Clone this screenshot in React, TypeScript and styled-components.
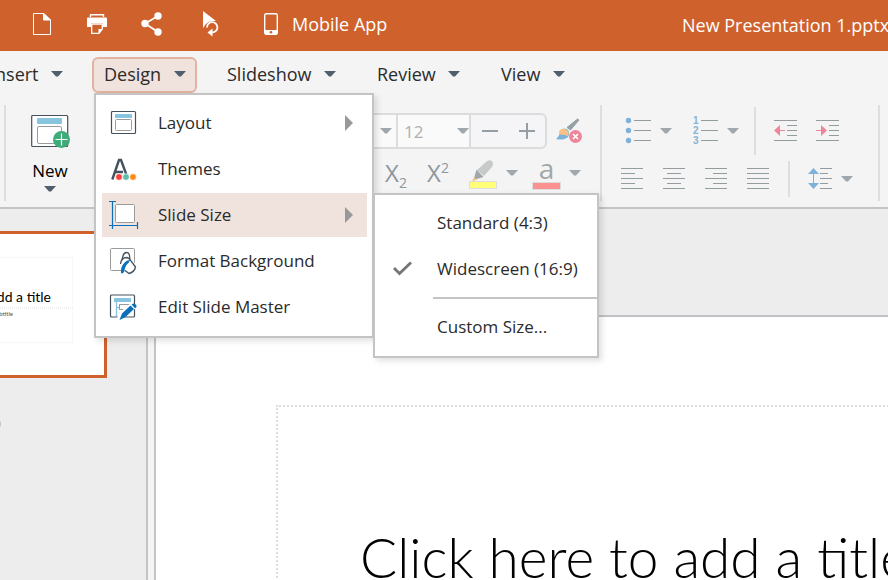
import React from "react";
import styled, { createGlobalStyle } from "styled-components";

const ink = "#44525e";
const fade = "#a0a8ae";
const line = "#c4c4c4";
const orange = "#cf622c";

const Global = createGlobalStyle`
  * { box-sizing: border-box; }
  body { margin: 0; font-family: "Open Sans", "Noto Sans", sans-serif; color: #2b2b2b; }
  button, select { font: inherit; color: inherit; background: none; border: 0; padding: 0; margin: 0; }
  svg { display: block; flex: none; overflow: visible; }
`;

const Shell = styled.div`
  display: flex;
  flex-direction: column;
  height: 100vh;
  overflow: hidden;
  background: #f4f4f4;
`;

const TitleBar = styled.header`
  display: flex;
  align-items: center;
  flex: none;
  height: 51px;
  padding: 0 0 4px 29px;
  background: ${orange};
  color: #fff;
  font-size: 18px;
`;

const TitleButton = styled.button`
  display: flex;
  align-items: center;
  justify-content: center;
  width: 26px;
  height: 40px;
  margin-right: 29px;
`;

const MobileLink = styled.a`
  display: flex;
  align-items: center;
  gap: 14px;
  margin-left: 15px;
  padding-top: 1px;
  color: inherit;
  text-decoration: none;
  white-space: nowrap;
`;

const FileName = styled.h1`
  width: 206px;
  margin: 2px 0 0 auto;
  font-size: 18px;
  font-weight: 400;
  white-space: nowrap;
`;

const Tabs = styled.nav`
  display: flex;
  align-items: center;
  flex: none;
  gap: 18px;
  height: 48px;
  margin-left: -22px;
`;

const TabSlot = styled.div`
  position: relative;
`;

const Tab = styled.button<{ $width: number; $open?: boolean }>`
  display: flex;
  align-items: center;
  justify-content: space-between;
  width: ${(p) => p.$width}px;
  height: 36px;
  padding: 0 9px 2px 10px;
  border: 2px solid ${(p) => (p.$open ? "#e2b39f" : "transparent")};
  border-radius: 6px;
  background: ${(p) => (p.$open ? "#f0e2dd" : "transparent")};
  font-size: 18px;
  white-space: nowrap;
`;

const Menu = styled.div<{ $sub?: boolean }>`
  position: absolute;
  z-index: ${(p) => (p.$sub ? 3 : 2)};
  top: ${(p) => (p.$sub ? "0" : "100%")};
  left: ${(p) => (p.$sub ? "271px" : "2px")};
  display: flex;
  flex-direction: column;
  gap: 2px;
  width: ${(p) => (p.$sub ? 226 : 280)}px;
  padding: 6px 5px 7px 6px;
  border: 2px solid ${line};
  background: #fff;
  box-shadow: 3px 3px 6px rgba(0, 0, 0, 0.12);
  font-size: 17px;
`;

const MenuSlot = styled.div`
  position: relative;
`;

const MenuItem = styled.button<{ $active?: boolean; $sub?: boolean }>`
  display: grid;
  grid-template-columns: ${(p) => (p.$sub ? "44px" : "42px")} 1fr auto;
  align-items: center;
  width: 100%;
  height: 44px;
  padding: 0 14px 1px ${(p) => (p.$sub ? 12 : 6)}px;
  background: ${(p) => (p.$active ? "#f0e2dd" : "transparent")};
  text-align: left;
  white-space: nowrap;
`;

const MenuLabel = styled.span`
  grid-column: 2;
  padding-left: 8px;
`;

const SubLabel = styled.span`
  grid-column: 2;
`;

const MenuRule = styled.hr`
  width: 164px;
  height: 2px;
  margin: 4px -5px 4px auto;
  border: 0;
  background: ${line};
`;

const Ribbon = styled.div`
  display: flex;
  align-items: flex-start;
  flex: none;
  height: 110px;
  padding: 6px 0 0 4px;
  border-bottom: 2px solid ${line};
`;

const Rule = styled.span<{ $h: number }>`
  flex: none;
  width: 2px;
  height: ${(p) => p.$h}px;
  background: #dedede;
`;

const NewButton = styled.button`
  display: flex;
  flex-direction: column;
  align-items: center;
  flex: none;
  width: 88px;
  padding-top: 9px;
  color: #000;
  font-size: 17px;
  line-height: 24px;
  span { margin: 11px 0 3px; }
`;

const FontGroup = styled.div`
  flex: none;
  width: 506px;
  padding-top: 5px;
`;

const Row = styled.div<{ $h: number; $pad: string; $gap?: number; $end?: boolean }>`
  display: flex;
  align-items: center;
  justify-content: ${(p) => (p.$end ? "flex-end" : "flex-start")};
  gap: ${(p) => p.$gap || 0}px;
  height: ${(p) => p.$h}px;
  padding: ${(p) => p.$pad};
`;

const FontBox = styled.div`
  display: flex;
  height: 36px;
  border: 2px solid #dcdcdc;
  border-radius: 6px;
  background: #f5f5f8;
  overflow: hidden;
  color: #b0b0b0;
  font-size: 17px;
`;

const Picker = styled.label<{ $w: number; $inset: number }>`
  display: flex;
  align-items: center;
  position: relative;
  width: ${(p) => p.$w}px;
  border-right: 2px solid #dcdcdc;
  background: #fafafa;
  svg { position: absolute; right: ${(p) => p.$inset}px; pointer-events: none; }
`;

const Select = styled.select`
  appearance: none;
  width: 100%;
  height: 32px;
  padding-left: 6px;
  opacity: 1;
`;

const Step = styled.button`
  display: flex;
  align-items: center;
  justify-content: center;
  width: 37px;
`;

const Tool = styled.button`
  display: flex;
  align-items: center;
  gap: 9px;
`;

const Script = styled.button`
  width: 24px;
  color: #8d979e;
  font-size: 24px;
  line-height: 30px;
  text-align: left;
  white-space: nowrap;
  sub, sup { font-size: 14px; line-height: 0; }
`;

const Glyph = styled.span`
  display: flex;
  flex-direction: column;
  align-items: center;
  width: 27px;
  height: 34px;
  color: #a0a8a8;
  font-size: 28px;
  line-height: 24px;
  &::after {
    content: "";
    width: 27px;
    height: 7px;
    margin-top: 2px;
    border: 1px solid #dedede;
    background: #fb9292;
  }
`;

const ParaGroup = styled.div`
  flex: none;
  width: 276px;
  padding-top: 2px;
`;

const Break = styled.div<{ $left: number }>`
  display: flex;
  margin: 0 18px 0 ${(p) => p.$left}px;
`;

const Pair = styled.div<{ $gap: number }>`
  display: flex;
  align-items: center;
  gap: ${(p) => p.$gap}px;
`;

const Work = styled.main`
  display: flex;
  flex: 1;
  min-height: 0;
`;

const Sidebar = styled.aside`
  display: flex;
  flex-direction: column;
  align-items: flex-end;
  flex: none;
  width: 148px;
  padding: 22px 39px 0 0;
  border-right: 2px solid ${line};
  background: #ededed;
`;

const Thumb = styled.div`
  flex: none;
  width: 261px;
  height: 147px;
  padding: 23px 31px;
  border: 3px solid ${orange};
  background: #fff;
  color: #000;
  text-align: right;
`;

const ThumbTitle = styled.div`
  height: 51px;
  padding: 30px 21px 0 0;
  border: 1px dotted #efefef;
  font: 400 14px/18px Lato, sans-serif;
  white-space: nowrap;
`;

const ThumbSub = styled.div`
  height: 35px;
  padding: 1px 59px 0 0;
  border: 1px dotted #efefef;
  color: #555;
  font: 400 6px/7px Lato, sans-serif;
`;

const Handle = styled.span`
  align-self: flex-start;
  width: 12px;
  height: 12px;
  margin: 40px 0 0 -11px;
  border-radius: 50%;
  background: #c0c0c0;
`;

const Divider = styled.div`
  flex: none;
  width: 6px;
  background: #f4f4f4;
`;

const Stage = styled.section`
  flex: 1;
  min-width: 0;
  padding-top: 106px;
  border-left: 2px solid ${line};
  background: #ededed;
  overflow: hidden;
`;

const Slide = styled.div`
  width: 960px;
  height: 540px;
  padding: 88px 120px;
  border-top: 2px solid #c2c2c6;
  background: #fff;
`;

const Placeholder = styled.div`
  height: 188px;
  padding: 114px 0 0 82px;
  border: 2px dotted #dcdcdc;
  color: #000;
  font: 300 55px/72px Lato, sans-serif;
  white-space: nowrap;
`;

const Caret = ({ color = "#4f5f6d" }: { color?: string }) => (
  <svg width="12" height="6" viewBox="0 0 12 6"><path d="M0 0H12L7 5.500H5Z" fill={color} /></svg>
);

const Arrow = () => (
  <svg width="8" height="16" viewBox="0 0 8 16"><path d="M0 0L8 8L0 16Z" fill="#999" /></svg>
);

const PageIcon = () => (
  <svg width="18" height="22" viewBox="0 0 18 22" fill="none" stroke="#fff">
    <path d="M.5 .5H11L17.500 7V21.500H.5Z" /><path d="M10.500 .5V7H17.500Z" fill="#fff" />
  </svg>
);
const PrintIcon = () => (
  <svg width="20" height="20" viewBox="0 0 20 20">
    <path d="M3.500 3V.7H16.500V3" fill="none" stroke="#fff" strokeWidth="1.400" />
    <path d="M1 3.500H19Q20 3.500 20 4.500V13H16V9.500H4V13H0V4.500Q0 3.500 1 3.500Z" fill="#fff" />
    <path d="M4.700 10.200H15.300V15L12 19.300H4.700Z" fill={orange} stroke="#fff" strokeWidth="1.300" />
    <path d="M11.500 19.500V15H15.500Z" fill="#fff" />
  </svg>
);
const ShareIcon = () => (
  <svg width="22" height="24" viewBox="0 0 22 24" fill="#fff">
    <path d="M17 4L4 11.500L17 20" fill="none" stroke="#fff" strokeWidth="1.800" />
    <circle cx="17" cy="4" r="3.700" /><circle cx="4" cy="11.500" r="3.700" /><circle cx="17" cy="20" r="3.700" />
  </svg>
);
const TouchIcon = () => (
  <svg width="24" height="26" viewBox="-8 0 24 26">
    <path d="M0 0L13 10Q6 9.500 3 13L0 17Z" fill="#fff" />
    <path d="M4 16.500A5.200 5.200 0 1 1 9.200 21.500" fill="none" stroke="#fff" strokeWidth="1.800" />
    <path d="M4.500 21.500L9.500 17.500V25.500Z" fill="#fff" />
  </svg>
);
const PhoneIcon = () => (
  <svg width="14" height="22" viewBox="0 0 14 22">
    <rect x=".7" y=".7" width="12.600" height="20.600" rx="1.500" fill="none" stroke="#fff" strokeWidth="1.400" />
    <path d="M1 17H13V21H1Z" fill="#fff" /><circle cx="7" cy="19.300" r="1.300" fill={orange} />
  </svg>
);

const NewIcon = () => (
  <svg width="39" height="34" viewBox="0 0 39 34">
    <rect x=".7" y="1.500" width="36" height="31" rx="1" fill="#fff" stroke={ink} strokeWidth="1.200" />
    <rect x="6" y="4" width="25" height="6" rx="1" fill="#86c5dd" />
    <rect x="6.500" y="12.500" width="24" height="17" rx="1.500" fill="#fff" stroke="#9b9b9b" />
    <circle cx="30.500" cy="25.500" r="8.500" fill="#3dac78" />
    <path d="M30.500 19.500V31.500M24.500 25.500H36.500" stroke="#fff" strokeWidth="1.200" />
  </svg>
);

const LayoutIcon = () => (
  <svg width="28" height="28" viewBox="0 0 28 28">
    <rect x="3.500" y="2.500" width="24" height="22" rx="1" fill="#fff" stroke={ink} strokeWidth="1.200" />
    <rect x="7" y="5" width="17" height="4" rx=".5" fill="#86c5dd" />
    <rect x="7.500" y="10.500" width="16" height="11" rx="1" fill="none" stroke="#9b9b9b" />
  </svg>
);
const ThemesIcon = () => (
  <svg width="28" height="28" viewBox="0 0 28 28">
    <path d="M4.300 24.500L11 5H13L18.500 20M6.500 17H15" fill="none" stroke={ink} strokeWidth="2.400" />
    <g stroke="#fff" strokeWidth=".6">
      <circle cx="11" cy="22" r="3.300" fill="#ff3d3d" /><circle cx="18" cy="22" r="3.300" fill="#5cbdab" /><circle cx="25" cy="22" r="3.300" fill="#ff8a18" />
    </g>
  </svg>
);
const SizeIcon = () => (
  <svg width="30" height="28" viewBox="0 0 30 28">
    <rect x="7.500" y="3.500" width="19" height="18" rx="1" fill="#fff" stroke="#9b9b9b" />
    <path d="M4.500 .5V28M1 .5H8M1 24.500H29M29.500 21V28" fill="none" stroke="#0b70b8" strokeWidth="1.200" />
  </svg>
);
const FormatIcon = () => (
  <svg width="30" height="28" viewBox="0 0 30 28">
    <rect x="2.500" y="1.500" width="24" height="22" rx="1" fill="#fff" stroke="#9b9b9b" />
    <path d="M14 13C15 9 15 5 18.500 5C22 5 22 10 22.500 13L27 19Q26 24 21 26L17 24L13 17Z" fill="#fff" stroke="#fff" strokeWidth="3" />
    <path d="M14 13C15 9 15 5.500 18.500 5.500C22 5.500 21.500 9 22 14" fill="none" stroke={ink} strokeWidth="1.300" />
    <path d="M12.500 17C13 12 16 10.500 19 10.500Q21.500 11 23 14L27.500 20Q26.500 25 21 26.500L17 23.500" fill="none" stroke={ink} strokeWidth="1.300" />
    <path d="M13 26C12.500 20 15 15.500 20.500 13L21.500 15C18 18 17 20 16.500 24Q15 27.500 13 26Z" fill="#0b70b8" />
  </svg>
);
const MasterIcon = () => (
  <svg width="30" height="28" viewBox="0 0 30 28">
    <rect x="2.500" y="2" width="24" height="22" rx="1" fill="#fff" stroke={ink} strokeWidth="1.200" />
    <rect x="6" y="5" width="17" height="4" rx=".5" fill="#86c5dd" />
    <path d="M8.500 9V23M8.500 14.500H11" stroke="#86c5dd" fill="none" strokeWidth="1.300" />
    <rect x="11.500" y="11.500" width="10" height="5" fill="#fff" stroke="#9b9b9b" />
    <path d="M11.500 24V20H18" fill="none" stroke="#9b9b9b" />
    <path d="M26 12L14 22L12 27" fill="none" stroke="#fff" strokeWidth="7" />
    <path d="M11.500 27L14 20.500L22.500 12.500L26 16L17 24.500ZM23.500 11.500L25.500 10.500Q29 11 28.500 14L27 15.300Z" fill="#0b70b8" />
  </svg>
);
const CheckIcon = () => (
  <svg width="20" height="15" viewBox="0 0 20 15"><path d="M1 7L6.500 12.500L18 1.500" fill="none" stroke="#757575" strokeWidth="2.800" /></svg>
);

const ClearIcon = () => (
  <svg width="26" height="26" viewBox="0 0 26 26">
    <path d="M21.500 1L23 2L14.500 12L11 9.500Z" fill="#96a0a7" stroke="#96a0a7" />
    <path d="M0 21Q4 18 4 12.500Q9 8.500 12.500 12.500Q15 19 8.500 21Q5 22 0 21Z" fill="#7fb2d9" />
    <path d="M3 13Q6 9.500 10 11.500Q14 14 12 18Q8 16 3.500 16.500Z" fill="#fac186" />
    <circle cx="19.500" cy="18.500" r="6.500" fill="#ee869b" />
    <path d="M17 16L22 21M22 16L17 21" stroke="#fff" strokeWidth="1.700" />
  </svg>
);
const MarkerIcon = () => (
  <svg width="28" height="32" viewBox="0 -3 28 32">
    <path d="M8 10L17 2Q20 -1 23 1Q25 4 23 7L15 16Z" fill="#c8caca" />
    <path d="M7.500 9.500L14.500 17L4.500 20Z" fill="#a0a8ad" />
    <path d="M3 21L5 17L8 20Z" fill="#fac186" />
    <rect x=".5" y="21.500" width="27" height="7" fill="#ffff78" stroke="#dedede" />
  </svg>
);
const BulletsIcon = () => (
  <svg width="26" height="26" viewBox="0 0 26 26">
    {[2.5, 12.5, 22.5].map((y) => (
      <g key={y}><circle cx="3.500" cy={y} r="2.700" fill="#7fb2d9" /><path d={`M9 ${y}H26`} stroke="#939c9f" /></g>
    ))}
  </svg>
);
const NumbersIcon = () => (
  <svg width="26" height="28" viewBox="0 0 26 28">
    {[3.5, 13.5, 23.5].map((y, i) => (
      <g key={y}>
        <text x="1" y={y + 3} fill="#84b3d4" fontFamily="Liberation Sans" fontSize="10" fontWeight="700">{i + 1}</text>
        <path d={`M9 ${y}H26`} stroke="#939c9f" />
      </g>
    ))}
  </svg>
);
const IndentIcon = ({ out }: { out?: boolean }) => (
  <svg width="23" height="22" viewBox="0 0 23 22">
    <path d="M0 .5H23M13 5.500H23M13 10.500H23M13 15.500H23M0 20.500H23" stroke="#939c9f" />
    <path d={out ? "M3 10.500H11" : "M0 10.500H8"} stroke="#ee869b" />
    <path d={out ? "M0 10.500L6 5V16Z" : "M11 10.500L5 5V16Z"} fill="#ee869b" />
  </svg>
);
const AlignIcon = ({ d }: { d: string }) => (
  <svg width="22" height="22" viewBox="0 0 22 22"><path d={`M0 .5H22M0 10.500H22M0 20.500H22${d}`} stroke="#939c9f" /></svg>
);
const SpacingIcon = () => (
  <svg width="24" height="22" viewBox="0 0 24 22">
    <path d="M12 .5H24M12 5.500H20M12 10.500H24M12 15.500H20M12 20.500H24" stroke="#939c9f" />
    <path d="M5.500 4V17" stroke="#7fb2d9" /><path d="M0 6L5.500 0L11 6ZM0 15L5.500 21L11 15Z" fill="#7fb2d9" />
  </svg>
);

const alignments: [string, string][] = [
  ["Align left", "M0 5.500H14M0 15.500H14"],
  ["Center", "M4 5.500H18M4 15.500H18"],
  ["Align right", "M8 5.500H22M8 15.500H22"],
  ["Justify", "M0 5.500H22M0 15.500H22"],
];

function SizeMenu() {
  return (
    <Menu $sub role="menu">
      <MenuItem $sub role="menuitemradio" aria-checked="false"><SubLabel>Standard (4:3)</SubLabel></MenuItem>
      <MenuItem $sub role="menuitemradio" aria-checked="true"><CheckIcon /><SubLabel>Widescreen (16:9)</SubLabel></MenuItem>
      <MenuRule />
      <MenuItem $sub role="menuitem"><SubLabel>Custom Size...</SubLabel></MenuItem>
    </Menu>
  );
}

function DesignMenu() {
  return (
    <Menu role="menu">
      <MenuItem role="menuitem"><LayoutIcon /><MenuLabel>Layout</MenuLabel><Arrow /></MenuItem>
      <MenuItem role="menuitem"><ThemesIcon /><MenuLabel>Themes</MenuLabel></MenuItem>
      <MenuSlot>
        <MenuItem role="menuitem" $active><SizeIcon /><MenuLabel>Slide Size</MenuLabel><Arrow /></MenuItem>
        <SizeMenu />
      </MenuSlot>
      <MenuItem role="menuitem"><FormatIcon /><MenuLabel>Format Background</MenuLabel></MenuItem>
      <MenuItem role="menuitem"><MasterIcon /><MenuLabel>Edit Slide Master</MenuLabel></MenuItem>
    </Menu>
  );
}

export default function App() {
  return (
    <Shell>
      <Global />
      <TitleBar>
        <TitleButton aria-label="New file"><PageIcon /></TitleButton>
        <TitleButton aria-label="Print"><PrintIcon /></TitleButton>
        <TitleButton aria-label="Share"><ShareIcon /></TitleButton>
        <TitleButton aria-label="Touch mode"><TouchIcon /></TitleButton>
        <MobileLink href="#mobile"><PhoneIcon />Mobile App</MobileLink>
        <FileName>New Presentation 1.pptx</FileName>
      </TitleBar>
      <Tabs>
        <Tab $width={96}>Insert<Caret /></Tab>
        <TabSlot>
          <Tab $width={105} $open aria-expanded="true">Design<Caret /></Tab>
          <DesignMenu />
        </TabSlot>
        <Tab $width={132}>Slideshow<Caret /></Tab>
        <Tab $width={106}>Review<Caret /></Tab>
        <Tab $width={87}>View<Caret /></Tab>
      </Tabs>
      <Ribbon>
        <Rule $h={96} />
        <NewButton><NewIcon /><span>New</span><Caret /></NewButton>
        <FontGroup>
          <Row $h={42} $pad="0 18px 0 0" $gap={9} $end>
            <FontBox>
              <Picker $w={180} $inset={4}><Select aria-label="Font" disabled><option></option></Select><Caret color={fade} /></Picker>
              <Picker $w={73} $inset={0}><Select aria-label="Font size" disabled><option>12</option></Select><Caret color={fade} /></Picker>
              <Step aria-label="Smaller"><svg width="16" height="16" viewBox="0 0 16 16"><path d="M0 8H16" stroke="#959da5" strokeWidth="2" /></svg></Step>
              <Step aria-label="Larger"><svg width="16" height="16" viewBox="0 0 16 16"><path d="M0 8H16M8 0V16" stroke="#959da5" strokeWidth="2" /></svg></Step>
            </FontBox>
            <Tool aria-label="Clear formatting"><ClearIcon /></Tool>
          </Row>
          <Row $h={42} $pad="0 19px 0 0" $gap={18} $end>
            <Pair $gap={18}>
              <Script aria-label="Subscript">X<sub>2</sub></Script>
              <Script aria-label="Superscript">X<sup>2</sup></Script>
            </Pair>
            <Pair $gap={15}>
              <Tool aria-label="Highlight"><MarkerIcon /><Caret color={fade} /></Tool>
              <Tool aria-label="Font colour"><Glyph>a</Glyph><Caret color={fade} /></Tool>
            </Pair>
          </Row>
        </FontGroup>
        <Rule $h={96} />
        <ParaGroup>
          <Row $h={48} $pad="0 0 0 23px">
            <Pair $gap={20}>
              <Tool aria-label="Bullets"><BulletsIcon /><Caret color={fade} /></Tool>
              <Tool aria-label="Numbering"><NumbersIcon /><Caret color={fade} /></Tool>
            </Pair>
            <Break $left={15}><Rule $h={48} /></Break>
            <Pair $gap={19}>
              <Tool aria-label="Decrease indent"><IndentIcon out /></Tool>
              <Tool aria-label="Increase indent"><IndentIcon /></Tool>
            </Pair>
          </Row>
          <Row $h={48} $pad="0 0 0 19px">
            <Pair $gap={20}>
              {alignments.map(([name, d]) => <Tool key={name} aria-label={name}><AlignIcon d={d} /></Tool>)}
            </Pair>
            <Break $left={19}><Rule $h={36} /></Break>
            <Tool aria-label="Line spacing"><SpacingIcon /><Caret color={fade} /></Tool>
          </Row>
        </ParaGroup>
        <Rule $h={96} />
      </Ribbon>
      <Work>
        <Sidebar>
          <Thumb>
            <ThumbTitle>Click here to add a title</ThumbTitle>
            <ThumbSub>Subtitle</ThumbSub>
          </Thumb>
          <Handle />
        </Sidebar>
        <Divider />
        <Stage>
          <Slide>
            <Placeholder>Click here to add a title</Placeholder>
          </Slide>
        </Stage>
      </Work>
    </Shell>
  );
}
